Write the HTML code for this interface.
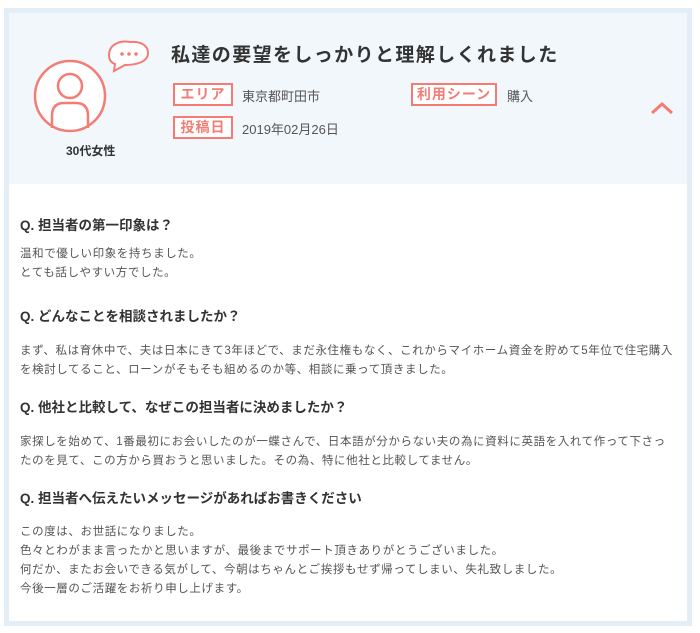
<!DOCTYPE html><html><head><meta charset="utf-8"><style>
body{margin:0;background:#fff;font-family:"Liberation Sans","Noto Sans CJK JP",sans-serif;}
.box{position:absolute;left:4px;top:8px;width:678px;height:608px;border:5px solid #e4eef6;background:#fff;}
.head{position:absolute;left:0;top:0;width:678px;height:171px;background:#f2f7fb;}
.t{position:absolute;white-space:nowrap;}
.tag{position:absolute;border:2px solid #f47c74;color:#f47c74;font-size:14px;font-weight:bold;height:19px;line-height:19px;text-align:center;letter-spacing:1px;background:#fff;}
.v{position:absolute;font-size:13px;color:#555;}
.q{position:absolute;left:11px;font-size:13.5px;font-weight:bold;color:#333;}
.a{position:absolute;left:11px;font-size:11.5px;color:#555;line-height:19px;width:655px;letter-spacing:.6px;}
</style></head><body>
<div class="box">
<div class="head">
<svg style="position:absolute;left:20px;top:21px" width="125" height="100" viewBox="0 0 125 100">
<circle cx="41" cy="62" r="35" fill="#fff" stroke="#f47c74" stroke-width="2.5"/>
<circle cx="41" cy="52" r="12" fill="none" stroke="#f47c74" stroke-width="2.5"/>
<path d="M23 94 V82 Q23 69 35 69 H47 Q59 69 59 82 V94" fill="none" stroke="#f47c74" stroke-width="2.5"/>
<path d="M101 8 C90 6 80 11 80 21 C80 27 83 29 86 30 L85 37 L96 31 C107 31 119 28 119 19 C119 11 111 7 101 8 Z" fill="#fff" stroke="#f47c74" stroke-width="2"/>
<circle cx="93" cy="20" r="1.8" fill="#f47c74"/><circle cx="100" cy="20" r="1.8" fill="#f47c74"/><circle cx="107" cy="20" r="1.8" fill="#f47c74"/>
</svg>
<div class="t" style="left:57px;top:129px;font-size:12px;font-weight:bold;color:#333">30代女性</div>
<div class="t" style="left:162px;top:27px;font-size:19px;font-weight:bold;color:#333;letter-spacing:1.4px">私達の要望をしっかりと理解しくれました</div>
<div class="tag" style="left:164px;top:70px;width:56px">エリア</div>
<div class="v" style="left:233px;top:73px">東京都町田市</div>
<div class="tag" style="left:402px;top:70px;width:82px">利用シーン</div>
<div class="v" style="left:498px;top:73px">購入</div>
<div class="tag" style="left:164px;top:103px;width:56px">投稿日</div>
<div class="v" style="left:233px;top:106px">2019年02月26日</div>
<svg style="position:absolute;left:641px;top:88px" width="24" height="14"><path d="M2 12 L12 3 L22 12" fill="none" stroke="#f47c74" stroke-width="3"/></svg>
</div>
<div class="q" style="top:201px">Q. 担当者の第一印象は？</div>
<div class="a" style="top:232px">温和で優しい印象を持ちました。<br>とても話しやすい方でした。</div>
<div class="q" style="top:292px">Q. どんなことを相談されましたか？</div>
<div class="a" style="top:329px">まず、私は育休中で、夫は日本にきて3年ほどで、まだ永住権もなく、これからマイホーム資金を貯めて5年位で住宅購入<br>を検討してること、ローンがそもそも組めるのか等、相談に乗って頂きました。</div>
<div class="q" style="top:383px">Q. 他社と比較して、なぜこの担当者に決めましたか？</div>
<div class="a" style="top:420px">家探しを始めて、1番最初にお会いしたのが一蝶さんで、日本語が分からない夫の為に資料に英語を入れて作って下さっ<br>たのを見て、この方から買おうと思いました。その為、特に他社と比較してません。</div>
<div class="q" style="top:474px">Q. 担当者へ伝えたいメッセージがあればお書きください</div>
<div class="a" style="top:510px">この度は、お世話になりました。<br>色々とわがまま言ったかと思いますが、最後までサポート頂きありがとうございました。<br>何だか、またお会いできる気がして、今朝はちゃんとご挨拶もせず帰ってしまい、失礼致しました。<br>今後一層のご活躍をお祈り申し上げます。</div>
</div>
</body></html>
